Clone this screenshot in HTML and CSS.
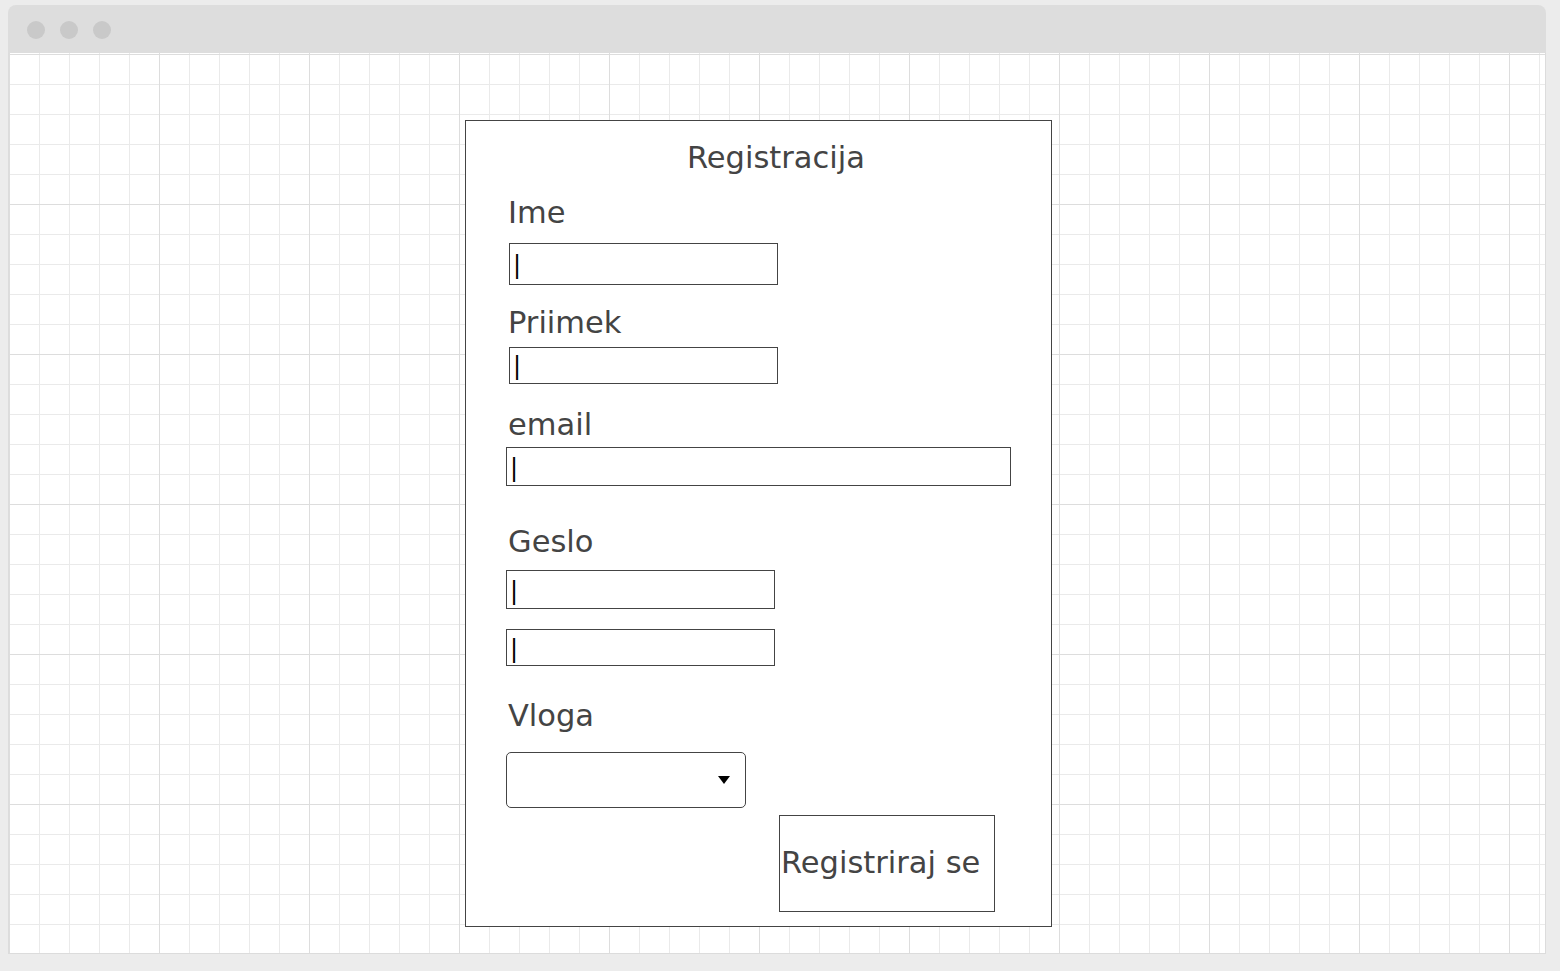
FILE: index.html
```html
<!DOCTYPE html>
<html lang="sl">
<head>
<meta charset="utf-8">
<title>Registracija</title>
<link rel="stylesheet" href="styles.css">
</head>
<body>
<div class="window">
  <div class="titlebar">
    <span class="dot"></span><span class="dot"></span><span class="dot"></span>
  </div>
  <div class="canvas">
    <div class="panel">
      <div class="title">Registracija</div>
      <div class="label l-ime">Ime</div>
      <div class="field f-ime"><span class="caret">|</span></div>
      <div class="label l-priimek">Priimek</div>
      <div class="field f-priimek"><span class="caret">|</span></div>
      <div class="label l-email">email</div>
      <div class="field f-email"><span class="caret">|</span></div>
      <div class="label l-geslo">Geslo</div>
      <div class="field f-geslo1"><span class="caret">|</span></div>
      <div class="field f-geslo2"><span class="caret">|</span></div>
      <div class="label l-vloga">Vloga</div>
      <div class="select">
        <svg class="arrow" width="12" height="8" viewBox="0 0 12 8"><polygon points="0,0 12,0 6,8" fill="#000"/></svg>
      </div>
      <div class="button">Registriraj se</div>
    </div>
  </div>
</div>
</body>
</html>
```

FILE: styles.css
```css
html, body {
  margin: 0;
  padding: 0;
}
body {
  background: #ececec;
  padding: 5px 0 0 8px;
  font-family: "DejaVu Sans", "Liberation Sans", sans-serif;
  color: #444;
}
.window {
  width: 1538px;
  display: flex;
  flex-direction: column;
}
.titlebar {
  height: 48px;
  background: #dddddd;
  border-radius: 8px 8px 0 0;
  display: flex;
  align-items: center;
  padding-left: 19px;
  gap: 15px;
  box-sizing: border-box;
}
.dot {
  width: 18px;
  height: 18px;
  border-radius: 50%;
  background: #c9c9c9;
  margin-top: 1px;
}
.canvas {
  height: 900px;
  border: 1px solid #dcdcdc;
  border-top: none;
  background-color: #fff;
  background-image:
    linear-gradient(to right, #dddddd 1px, transparent 1px),
    linear-gradient(to bottom, #dddddd 1px, transparent 1px),
    linear-gradient(to right, #eaeaea 1px, transparent 1px),
    linear-gradient(to bottom, #eaeaea 1px, transparent 1px);
  background-size: 150px 150px, 150px 150px, 30px 30px, 30px 30px;
  background-position: 0 1px, 0 1px, 0 1px, 0 1px;
  display: flex;
  flex-direction: column;
  align-items: flex-start;
}
.panel {
  box-sizing: border-box;
  width: 587px;
  height: 807px;
  margin: 67px 0 0 456px;
  border: 1px solid #444;
  background: #fff;
  display: flex;
  flex-direction: column;
  align-items: flex-start;
}
.title {
  font-size: 30.5px;
  line-height: 35px;
  margin: 19px 0 0 221px;
}
.label {
  font-size: 30.5px;
  line-height: 36px;
  padding-top: 1px;
  margin-left: 42px;
}
.field {
  box-sizing: border-box;
  border: 1px solid #444;
  background: #fff;
  display: flex;
  align-items: flex-end;
  padding: 0 0 5px 3px;
}
.caret {
  font-size: 24px;
  line-height: 24px;
  color: #000;
}
.l-ime { margin-top: 19px; }
.f-ime { margin: 12px 0 0 43px; width: 269px; height: 42px; padding-bottom: 7px; }
.l-priimek { margin-top: 19px; }
.f-priimek { margin: 6px 0 0 43px; width: 269px; height: 37px; }
.l-email { margin-top: 22px; }
.f-email { margin: 4px 0 0 40px; width: 505px; height: 39px; }
.l-geslo { margin-top: 37px; }
.f-geslo1 { margin: 10px 0 0 40px; width: 269px; height: 39px; }
.f-geslo2 { margin: 20px 0 0 40px; width: 269px; height: 37px; padding-bottom: 4px; }
.l-vloga { margin-top: 31px; }
.select {
  box-sizing: border-box;
  margin: 18px 0 0 40px;
  width: 240px;
  height: 56px;
  border: 1px solid #444;
  border-radius: 5px;
  background: #fff;
  display: flex;
  align-items: center;
  justify-content: flex-end;
  padding-right: 15px;
}
.arrow {
  display: block;
}
.button {
  box-sizing: border-box;
  margin: 7px 0 0 313px;
  width: 216px;
  height: 97px;
  border: 1px solid #444;
  background: #fff;
  font-size: 30.5px;
  line-height: 35px;
  padding: 29px 0 0 1px;
  white-space: nowrap;
}
```
